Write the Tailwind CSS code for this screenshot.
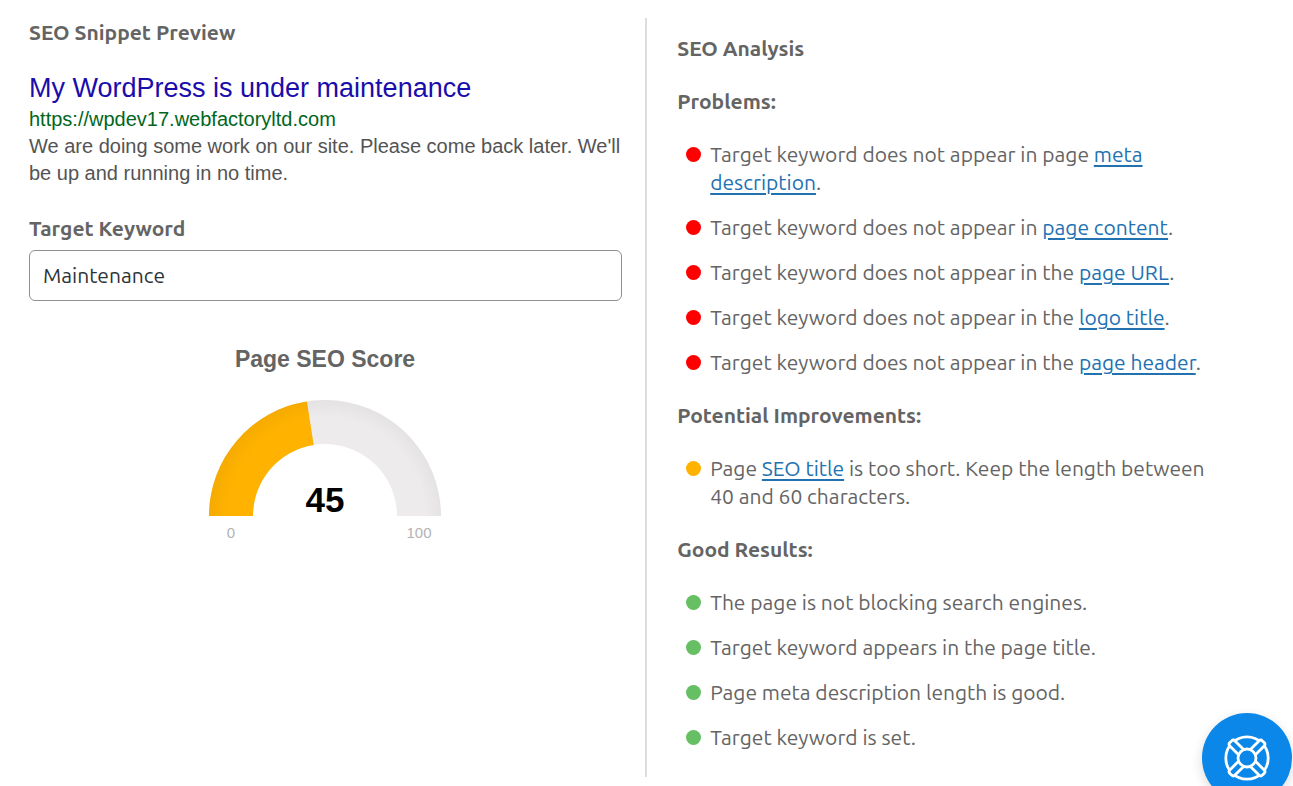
<!DOCTYPE html>
<html lang="en">
<head>
  <meta charset="UTF-8" />
  <meta name="viewport" content="width=device-width, initial-scale=1.0"/>
  <title>SEO</title>
  <script src="https://cdn.jsdelivr.net/npm/@tailwindcss/browser@4"></script>
</head>
<body class="bg-white text-[#646464] font-[Ubuntu,'Noto_Sans',sans-serif] text-[21px] leading-[28px]">

  <main class="grid grid-cols-[49.9%_1fr] pt-[18px] pb-[9px]">

    <!-- Snippet preview + score -->
    <section class="pl-[29px] pr-[23px]">
      <h2 class="font-bold">SEO Snippet Preview</h2>

      <div class="mt-[25px] font-['Liberation_Sans',Arial,sans-serif] text-[20px] leading-[27px] text-[#545454]">
        <h3 class="text-[27px] leading-[35px] text-[#1a0dab]">My WordPress is under maintenance</h3>
        <p class="text-[#006621]">https://wpdev17.webfactoryltd.com</p>
        <p>We are doing some work on our site. Please come back later. We'll be up and running in no time.</p>
      </div>

      <label for="keyword" class="block mt-[27px] font-bold">Target Keyword</label>
      <input id="keyword" type="text" value="Maintenance" class="block w-full h-[51px] mt-2 px-[13px] pb-[2px] border border-[#8c8f94] rounded-[6px] text-[#2c3338]">

      <!-- Gauge -->
      <svg class="block mx-auto mt-10 w-[240px] h-[210px] font-['Liberation_Sans',Arial,sans-serif]" viewBox="0 0 240 210" text-anchor="middle" role="img" aria-label="Page SEO Score 45">
        <defs>
          <radialGradient id="track" gradientUnits="userSpaceOnUse" cx="120" cy="175" r="116">
            <stop offset="0.62" stop-color="#edebeb"/>
            <stop offset="0.85" stop-color="#edebeb"/>
            <stop offset="1" stop-color="#e4e2e2"/>
          </radialGradient>
          <radialGradient id="level" gradientUnits="userSpaceOnUse" cx="120" cy="175" r="116">
            <stop offset="0.62" stop-color="#ffb300"/>
            <stop offset="0.85" stop-color="#ffb300"/>
            <stop offset="1" stop-color="#f5ab00"/>
          </radialGradient>
        </defs>
        <text x="119" y="26" font-size="23" font-weight="700" fill="#646464">Page SEO Score</text>
        <path d="M3 175A116 116 0 0 1 235 175H191A72 72 0 0 0 47 175Z" fill="url(#track)"/>
        <path d="M3 175A116 116 0 0 1 100.9 60.4L107.7 103.9A72 72 0 0 0 47 175Z" fill="url(#level)"/>
        <text x="119" y="171" font-size="35" font-weight="700" fill="#000">45</text>
        <text x="25" y="197" font-size="15" fill="#b3b3b3">0</text>
        <text x="213" y="197" font-size="15" fill="#b3b3b3">100</text>
      </svg>
    </section>

    <!-- Analysis -->
    <section class="flex flex-col gap-[25px] border-l-2 border-[#dcdcde] pl-[30px] pr-[60px] pt-4 pb-[26px]">
      <h2 class="font-bold">SEO Analysis</h2>

      <h3 class="font-bold">Problems:</h3>
      <ul class="flex flex-col gap-[17px] pl-[9px]">
        <li class="flex gap-[9px]"><span class="size-[15px] mt-[7px] shrink-0 rounded-full bg-[#ff0000]"></span><p>Target keyword does not appear in page <a href="#" class="text-[#2271b1] underline underline-offset-3 decoration-2">meta description</a>.</p></li>
        <li class="flex gap-[9px]"><span class="size-[15px] mt-[7px] shrink-0 rounded-full bg-[#ff0000]"></span><p>Target keyword does not appear in <a href="#" class="text-[#2271b1] underline underline-offset-3 decoration-2">page content</a>.</p></li>
        <li class="flex gap-[9px]"><span class="size-[15px] mt-[7px] shrink-0 rounded-full bg-[#ff0000]"></span><p>Target keyword does not appear in the <a href="#" class="text-[#2271b1] underline underline-offset-3 decoration-2">page URL</a>.</p></li>
        <li class="flex gap-[9px]"><span class="size-[15px] mt-[7px] shrink-0 rounded-full bg-[#ff0000]"></span><p>Target keyword does not appear in the <a href="#" class="text-[#2271b1] underline underline-offset-3 decoration-2">logo title</a>.</p></li>
        <li class="flex gap-[9px]"><span class="size-[15px] mt-[7px] shrink-0 rounded-full bg-[#ff0000]"></span><p>Target keyword does not appear in the <a href="#" class="text-[#2271b1] underline underline-offset-3 decoration-2">page header</a>.</p></li>
      </ul>

      <h3 class="font-bold">Potential Improvements:</h3>
      <ul class="flex flex-col gap-[17px] pl-[9px]">
        <li class="flex gap-[9px]"><span class="size-[15px] mt-[7px] shrink-0 rounded-full bg-[#ffb300]"></span><p>Page <a href="#" class="text-[#2271b1] underline underline-offset-3 decoration-2">SEO title</a> is too short. Keep the length between 40 and 60 characters.</p></li>
      </ul>

      <h3 class="font-bold">Good Results:</h3>
      <ul class="flex flex-col gap-[17px] pl-[9px]">
        <li class="flex gap-[9px]"><span class="size-[15px] mt-[7px] shrink-0 rounded-full bg-[#66bf63]"></span><p>The page is not blocking search engines.</p></li>
        <li class="flex gap-[9px]"><span class="size-[15px] mt-[7px] shrink-0 rounded-full bg-[#66bf63]"></span><p>Target keyword appears in the page title.</p></li>
        <li class="flex gap-[9px]"><span class="size-[15px] mt-[7px] shrink-0 rounded-full bg-[#66bf63]"></span><p>Page meta description length is good.</p></li>
        <li class="flex gap-[9px]"><span class="size-[15px] mt-[7px] shrink-0 rounded-full bg-[#66bf63]"></span><p>Target keyword is set.</p></li>
      </ul>
    </section>
  </main>

  <!-- Help button -->
  <button type="button" aria-label="Help" class="fixed right-px -bottom-[17px] size-[90px] flex items-center justify-center rounded-full bg-[#0a87e8] shadow-[0_4px_12px_rgb(0_0_0/0.15)]">
    <svg class="size-[50px]" viewBox="-25 -25 50 50" fill="#0a87e8" stroke="#fff" stroke-width="2.8" stroke-linejoin="round">
      <circle r="21.2"/>
      <path d="M-3.6 -8V-20.6Q-3.6 -23 -1.2 -23H1.2Q3.6 -23 3.6 -20.6V-8" transform="rotate(45)"/>
      <path d="M-3.6 -8V-20.6Q-3.6 -23 -1.2 -23H1.2Q3.6 -23 3.6 -20.6V-8" transform="rotate(135)"/>
      <path d="M-3.6 -8V-20.6Q-3.6 -23 -1.2 -23H1.2Q3.6 -23 3.6 -20.6V-8" transform="rotate(225)"/>
      <path d="M-3.6 -8V-20.6Q-3.6 -23 -1.2 -23H1.2Q3.6 -23 3.6 -20.6V-8" transform="rotate(315)"/>
      <circle r="9"/>
    </svg>
  </button>

</body>
</html>
